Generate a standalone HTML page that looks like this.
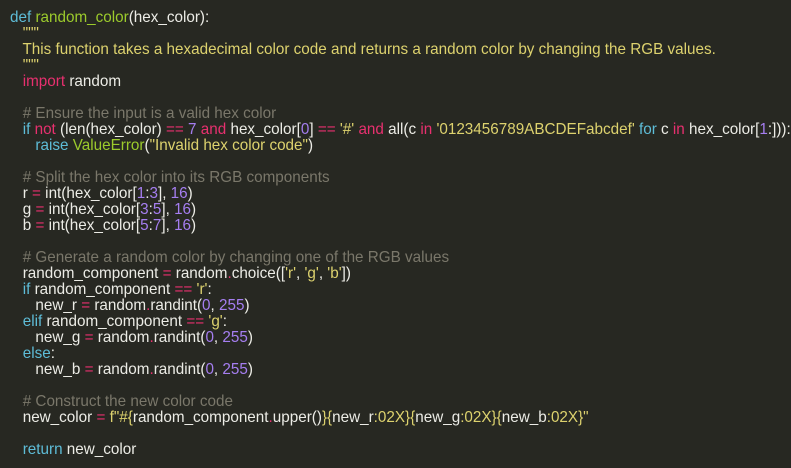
<!DOCTYPE html>
<html><head><meta charset="utf-8"><style>
html,body{margin:0;padding:0;background:#272822;width:791px;height:468px;overflow:hidden}
pre{margin:0;padding:10px 0 0 10px;font-family:"Liberation Sans",sans-serif;font-size:15.25px;line-height:16px;color:#ececE6;white-space:pre}
.k{color:#5ebdd8}.p{color:#e8306f}.g{color:#9ccb2c}.s{color:#ddd26e}.n{color:#a57ef0}.c{color:#7a776a}
</style></head><body><pre><span class="k">def</span> <span class="g">random_color</span>(hex_color):
   <span class="s">"""</span>
   <span class="s">This function takes a hexadecimal color code and returns a random color by changing the RGB values.</span>
   <span class="s">"""</span>
   <span class="p">import</span> random

   <span class="c"># Ensure the input is a valid hex color</span>
   <span class="k">if</span> <span class="p">not</span> (len(hex_color) <span class="p">==</span> <span class="n">7</span> <span class="p">and</span> hex_color[<span class="n">0</span>] <span class="p">==</span> <span class="s">'#'</span> <span class="p">and</span> all(c <span class="p">in</span> <span class="s">'0123456789ABCDEFabcdef'</span> <span class="k">for</span> c <span class="p">in</span> hex_color[<span class="n">1</span>:])):
      <span class="k">raise</span> <span class="g">ValueError</span>(<span class="s">"Invalid hex color code"</span>)

   <span class="c"># Split the hex color into its RGB components</span>
   r <span class="p">=</span> int(hex_color[<span class="n">1</span>:<span class="n">3</span>], <span class="n">16</span>)
   g <span class="p">=</span> int(hex_color[<span class="n">3</span>:<span class="n">5</span>], <span class="n">16</span>)
   b <span class="p">=</span> int(hex_color[<span class="n">5</span>:<span class="n">7</span>], <span class="n">16</span>)

   <span class="c"># Generate a random color by changing one of the RGB values</span>
   random_component <span class="p">=</span> random<span class="p">.</span>choice([<span class="s">'r'</span>, <span class="s">'g'</span>, <span class="s">'b'</span>])
   <span class="k">if</span> random_component <span class="p">==</span> <span class="s">'r'</span>:
      new_r <span class="p">=</span> random<span class="p">.</span>randint(<span class="n">0</span>, <span class="n">255</span>)
   <span class="k">elif</span> random_component <span class="p">==</span> <span class="s">'g'</span>:
      new_g <span class="p">=</span> random<span class="p">.</span>randint(<span class="n">0</span>, <span class="n">255</span>)
   <span class="k">else</span>:
      new_b <span class="p">=</span> random<span class="p">.</span>randint(<span class="n">0</span>, <span class="n">255</span>)

   <span class="c"># Construct the new color code</span>
   new_color <span class="p">=</span> <span class="s">f"#{</span>random_component<span class="p">.</span>upper()<span class="s">}{</span>new_r<span class="s">:02X}{</span>new_g<span class="s">:02X}{</span>new_b<span class="s">:02X}"</span>

   <span class="k">return</span> new_color</pre></body></html>
